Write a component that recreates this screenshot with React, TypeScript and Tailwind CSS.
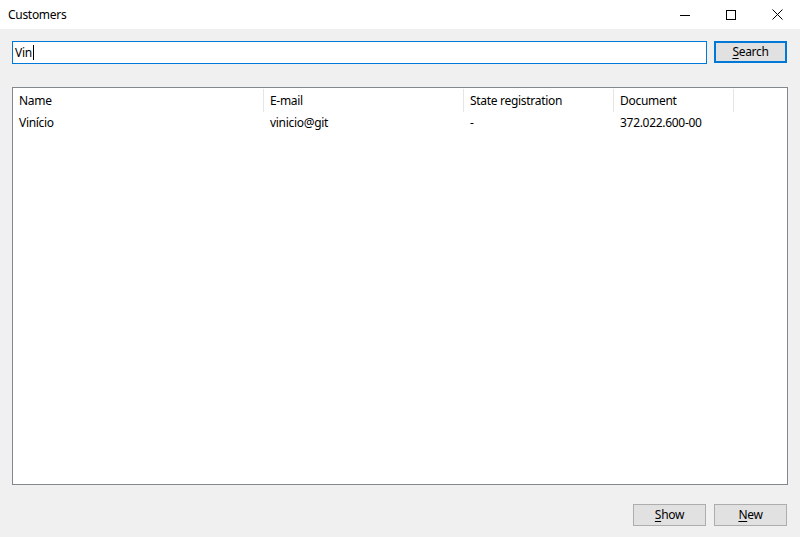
const font = { fontFamily: '"Segoe UI", "Noto Sans", sans-serif', letterSpacing: "-0.3px" };

const columns = [
  { label: "Name", width: "w-[251px]" },
  { label: "E-mail", width: "w-[200px]" },
  { label: "State registration", width: "w-[150px]" },
  { label: "Document", width: "w-[120px]" },
];

const rows = [["Vinício", "vinicio@git", "-", "372.022.600-00"]];

function WinButton({ children }: { children: React.ReactNode }) {
  return <div className="w-[46px] h-[29px] flex items-center justify-center">{children}</div>;
}

function Btn({ first, rest, focused }: { first: string; rest: string; focused?: boolean }) {
  return (
    <button
      className={
        "w-[73px] h-[22px] bg-[#e1e1e1] text-[12px] text-black flex items-center justify-center leading-none " +
        (focused ? "border-2 border-[#0078d7]" : "border border-[#adadad]")
      }
    >
      <span className="underline underline-offset-2">{first}</span>
      {rest}
    </button>
  );
}

export default function App() {
  return (
    <div className="w-[800px] h-[537px] flex flex-col bg-[#f0f0f0] text-black overflow-hidden" style={font}>
      <div className="h-[29px] bg-white flex items-center">
        <span className="pl-2 text-[12px] flex-1">Customers</span>
        <WinButton>
          <svg width="10" height="10" viewBox="0 0 10 10">
            <path d="M0 5.5h10" stroke="black" strokeWidth="1" />
          </svg>
        </WinButton>
        <WinButton>
          <svg width="10" height="10" viewBox="0 0 10 10">
            <rect x="0.5" y="0.5" width="9" height="9" fill="none" stroke="black" strokeWidth="1" />
          </svg>
        </WinButton>
        <WinButton>
          <svg width="11" height="11" viewBox="0 0 11 11">
            <path d="M0.5 0.5l10 10M10.5 0.5l-10 10" stroke="black" strokeWidth="1" />
          </svg>
        </WinButton>
      </div>

      <div className="flex items-start gap-[7px] pl-3 pr-[13px] pt-3">
        <div className="w-[695px] h-[23px] bg-white border border-[#0078d7] flex items-center pl-[2px] text-[12px]">
          Vin<span className="w-px h-[15px] bg-black inline-block ml-px" />
        </div>
        <Btn first="S" rest="earch" focused />
      </div>

      <div className="mx-3 mt-[23px] h-[398px] bg-white border border-[#828790] flex flex-col text-[12px]">
        <div className="flex h-[25px]">
          {columns.map((c) => (
            <div key={c.label} className={c.width + " flex items-center pl-[6px] border-r border-[#e5e5e5] my-px"}>
              {c.label}
            </div>
          ))}
        </div>
        {rows.map((r, i) => (
          <div key={i} className="flex h-[20px] items-center">
            {r.map((v, j) => (
              <div key={j} className={columns[j].width + " pl-[6px]"}>
                {v}
              </div>
            ))}
          </div>
        ))}
      </div>

      <div className="flex justify-end gap-2 pr-[13px] mt-[19px]">
        <Btn first="S" rest="how" />
        <Btn first="N" rest="ew" />
      </div>
    </div>
  );
}
